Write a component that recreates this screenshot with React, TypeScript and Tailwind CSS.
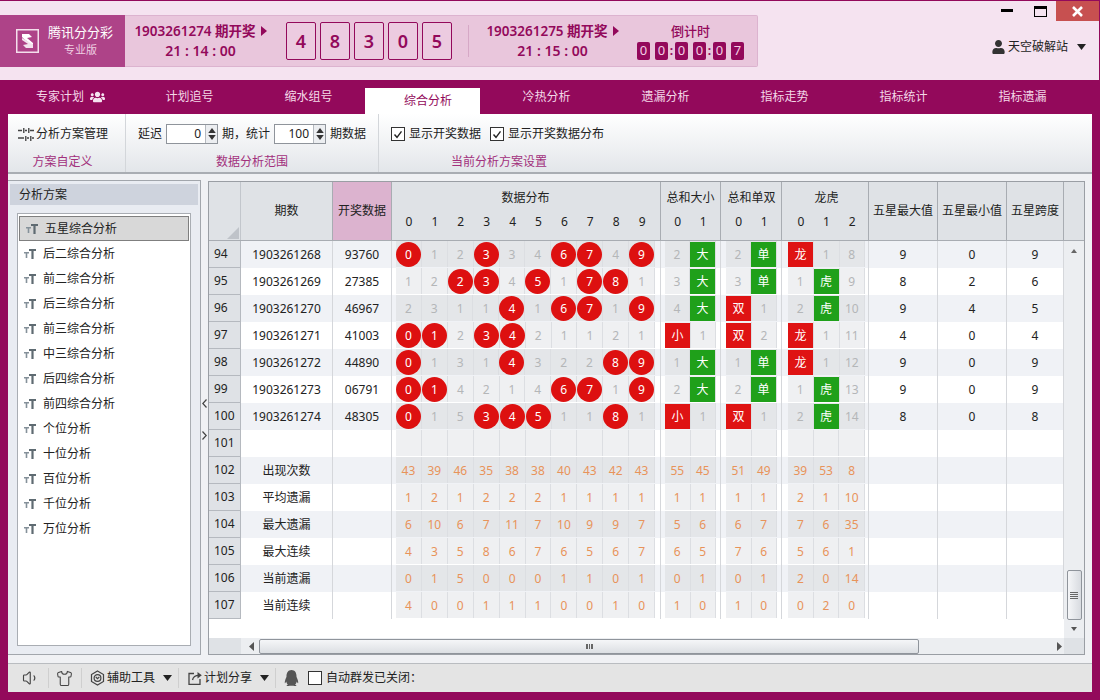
import { Shirt, Volume1 } from 'lucide-react'
import { FaQq, FaUser, FaUsers } from 'react-icons/fa'

// ---- 数据 ----

type Mark = number | string

interface DrawRow {
  no: number
  period: string
  draw: string
  dist: number[]
  size: Mark[]
  parity: Mark[]
  dragon: Mark[]
  max: number
  min: number
  span: number
}

const draws: DrawRow[] = [
  { no: 94, period: '1903261268', draw: '93760', dist: [0, 1, 2, 0, 3, 4, 0, 0, 4, 0], size: [2, '大'], parity: [2, '单'], dragon: ['龙', 1, 8], max: 9, min: 0, span: 9 },
  { no: 95, period: '1903261269', draw: '27385', dist: [1, 2, 0, 0, 4, 0, 1, 0, 0, 1], size: [3, '大'], parity: [3, '单'], dragon: [1, '虎', 9], max: 8, min: 2, span: 6 },
  { no: 96, period: '1903261270', draw: '46967', dist: [2, 3, 1, 1, 0, 1, 0, 0, 1, 0], size: [4, '大'], parity: ['双', 1], dragon: [2, '虎', 10], max: 9, min: 4, span: 5 },
  { no: 97, period: '1903261271', draw: '41003', dist: [0, 0, 2, 0, 0, 2, 1, 1, 2, 1], size: ['小', 1], parity: ['双', 2], dragon: ['龙', 1, 11], max: 4, min: 0, span: 4 },
  { no: 98, period: '1903261272', draw: '44890', dist: [0, 1, 3, 1, 0, 3, 2, 2, 0, 0], size: [1, '大'], parity: [1, '单'], dragon: ['龙', 1, 12], max: 9, min: 0, span: 9 },
  { no: 99, period: '1903261273', draw: '06791', dist: [0, 0, 4, 2, 1, 4, 0, 0, 1, 0], size: [2, '大'], parity: [2, '单'], dragon: [1, '虎', 13], max: 9, min: 0, span: 9 },
  { no: 100, period: '1903261274', draw: '48305', dist: [0, 1, 5, 0, 0, 0, 1, 1, 0, 1], size: ['小', 1], parity: ['双', 1], dragon: [2, '虎', 14], max: 8, min: 0, span: 8 },
]

const stats = [
  { no: 102, label: '出现次数', dist: [43, 39, 46, 35, 38, 38, 40, 43, 42, 43], size: [55, 45], parity: [51, 49], dragon: [39, 53, 8] },
  { no: 103, label: '平均遗漏', dist: [1, 2, 1, 2, 2, 2, 1, 1, 1, 1], size: [1, 1], parity: [1, 1], dragon: [2, 1, 10] },
  { no: 104, label: '最大遗漏', dist: [6, 10, 6, 7, 11, 7, 10, 9, 9, 7], size: [5, 6], parity: [6, 7], dragon: [7, 6, 35] },
  { no: 105, label: '最大连续', dist: [4, 3, 5, 8, 6, 7, 6, 5, 6, 7], size: [6, 5], parity: [7, 6], dragon: [5, 6, 1] },
  { no: 106, label: '当前遗漏', dist: [0, 1, 5, 0, 0, 0, 1, 1, 0, 1], size: [0, 1], parity: [0, 1], dragon: [2, 0, 14] },
  { no: 107, label: '当前连续', dist: [4, 0, 0, 1, 1, 1, 0, 0, 1, 0], size: [1, 0], parity: [1, 0], dragon: [0, 2, 0] },
]

const tabs = ['专家计划', '计划追号', '缩水组号', '综合分析', '冷热分析', '遗漏分析', '指标走势', '指标统计', '指标遗漏']

const schemes = [
  '五星综合分析', '后二综合分析', '前二综合分析', '后三综合分析', '前三综合分析', '中三综合分析', '后四综合分析',
  '前四综合分析', '个位分析', '十位分析', '百位分析', '千位分析', '万位分析',
]

const GREEN_MARKS = ['大', '单', '虎']
const DIGITS = [0, 1, 2, 3, 4, 5, 6, 7, 8, 9]

// 列宽: 序号 / 期数 / 开奖 / 分布 / 大小 / 单双 / 龙虎 / 最大 / 最小 / 跨度
const COL_NO = 'w-[32px] shrink-0'
const COL_PERIOD = 'w-[92px] shrink-0'
const COL_DRAW = 'w-[59px] shrink-0'
const COL_DIST = 'w-[269px] shrink-0 pl-[4px] pr-[5px]'
const COL_SIZE = 'w-[60px] shrink-0 pl-[4px] pr-[4px]'
const COL_PARITY = 'w-[61px] shrink-0 pl-[5px] pr-[4px]'
const COL_DRAGON = 'w-[87px] shrink-0 pl-[6px] pr-[3px]'
const COL_MAX = 'w-[69px] shrink-0'
const COL_MIN = 'w-[69px] shrink-0'
const COL_SPAN = 'w-[57px] shrink-0'

// ---- 小图标 ----

function Caret({ className = '' }: { className?: string }) {
  return (
    <svg width="9" height="6" viewBox="0 0 9 6" className={className}>
      <path d="M0 0h9L4.5 6z" fill="currentColor" />
    </svg>
  )
}

function PlayMark() {
  return (
    <svg width="6" height="10" viewBox="0 0 6 10" className="ml-[5px] inline-block">
      <path d="M0 0l6 5-6 5z" fill="#93095b" />
    </svg>
  )
}

function LogoMark() {
  return (
    <svg width="23" height="24" viewBox="0 0 23 24" className="shrink-0">
      <rect x="0.75" y="0.75" width="21.5" height="22.5" fill="none" stroke="#f4dfec" strokeWidth="1.5" />
      <path d="M6 5h7l3 3-5 1 6 5v2l-9-6-2-2z" fill="#fff" />
      <path d="M17 19h-7l-3-3 5-1-6-4V9l9 5 2 2z" fill="#fff" opacity="0.85" />
    </svg>
  )
}

function SizeIcon() {
  return (
    <svg width="12" height="10" viewBox="0 0 12 10" className="shrink-0">
      <path d="M5 0h7v2H9.6v8H7.4V2H5z" fill="#5f6b72" />
      <path d="M0 3h5v1.5H3.3V9H1.7V4.5H0z" fill="#85919a" />
    </svg>
  )
}

function SlidersIcon() {
  return (
    <svg width="16" height="13" viewBox="0 0 16 13" className="shrink-0">
      <path d="M0 2.5h4M7 2.5h2M12 2.5h4M0 10h6M9 10h2M14 10h2" stroke="#444" strokeWidth="1.6" />
      <path d="M5 0h1.5v5H5zM10 0h1.5v5H10zM7 8h1.5v5H7zM12 8h1.5v5H12z" fill="#555" />
    </svg>
  )
}

function ToolIcon() {
  return (
    <svg width="15" height="16" viewBox="0 0 15 16" fill="none" stroke="#444" strokeWidth="1.2" className="shrink-0">
      <path d="M7.5 1l6 3.5v7l-6 3.5-6-3.5v-7z" />
      <circle cx="7.5" cy="8" r="3.4" />
      <path d="M5.8 7l1.7 1.6L9.3 7" />
    </svg>
  )
}

function ShareIcon() {
  return (
    <svg width="15" height="14" viewBox="0 0 15 14" fill="none" stroke="#444" strokeWidth="1.3" className="shrink-0">
      <path d="M6 2.5H1v10.8h11V8" />
      <path d="M4.5 9c.6-3 3-4.6 6.5-4.6" />
      <path d="M9.5 1l4.3 3.3-4.3 3.2z" fill="#444" stroke="none" />
    </svg>
  )
}

function Check({ checked = false }: { checked?: boolean }) {
  return (
    <span className="flex h-[14px] w-[14px] shrink-0 items-center justify-center border border-[#333] bg-white">
      {checked && (
        <svg width="10" height="9" viewBox="0 0 10 9" fill="none" stroke="#222" strokeWidth="1.4">
          <path d="M1.5 4.5l2.5 2.8 4.5-6" />
        </svg>
      )}
    </span>
  )
}

// ---- 顶部 ----

function IssueInfo({ issue, time }: { issue: string; time: string }) {
  return (
    <div className="flex w-[135px] shrink-0 flex-col items-center gap-[2px] text-[13.5px] leading-[18px] font-semibold text-[#93095b]">
      <div className="flex items-center whitespace-nowrap">
        {issue} 期开奖
        <PlayMark />
      </div>
      <div className="text-[14px] whitespace-pre">{time}</div>
    </div>
  )
}

function CountDigit({ value }: { value: string }) {
  return (
    <span className="flex h-[18px] w-[13px] items-center justify-center rounded-[2px] bg-[#93095b] text-[13px] text-[#f3cfe4]">
      {value}
    </span>
  )
}

function Header() {
  return (
    <div className="flex h-[80px] shrink-0 border-t border-r border-[#93095b] bg-[#f5e3f0]">
      <div className="mt-[14px] flex h-[52px] w-[758px] shrink-0 items-center rounded-r-[2px] border-y border-r border-[#dcb3cf] bg-[#e9c6dc]">
        <div className="flex h-[52px] w-[125px] shrink-0 items-center gap-[9px] bg-[#ae4388] pl-[16px]">
          <LogoMark />
          <div className="flex flex-col items-center text-white">
            <span className="text-[13px] leading-[18px] whitespace-nowrap">腾讯分分彩</span>
            <span className="text-[11px] leading-[18px] text-[#efcfe2]">专业版</span>
          </div>
        </div>
        <div className="ml-[8px]">
          <IssueInfo issue="1903261274" time="21 : 14 : 00" />
        </div>
        <div className="ml-[18px] flex gap-[4px]">
          {['4', '8', '3', '0', '5'].map((n, i) => (
            <span
              key={i}
              className="flex h-[38px] w-[30px] items-center justify-center rounded-[2px] border border-[#93095b] bg-[#eccbe0] text-[18px] font-semibold text-[#93095b]"
            >
              {n}
            </span>
          ))}
        </div>
        <div className="mx-[16px] h-[32px] w-px bg-[#d6a8c6]" />
        <IssueInfo issue="1903261275" time="21 : 15 : 00" />
        <div className="ml-[17px] flex flex-col items-center gap-[2px]">
          <span className="text-[13px] leading-[18px] font-medium text-[#93095b]">倒计时</span>
          <div className="flex items-center text-[#93095b]">
            <div className="flex gap-[5px]">
              <CountDigit value="0" />
              <CountDigit value="0" />
            </div>
            <span className="w-[7px] text-center text-[12px] leading-none font-bold">:</span>
            <div className="flex gap-[5px]">
              <CountDigit value="0" />
              <CountDigit value="0" />
            </div>
            <span className="w-[7px] text-center text-[12px] leading-none font-bold">:</span>
            <div className="flex gap-[5px]">
              <CountDigit value="0" />
              <CountDigit value="7" />
            </div>
          </div>
        </div>
      </div>

      <div className="flex flex-1 flex-col">
        <div className="flex h-[20px] items-start justify-end">
          <span className="mt-[8px] mr-[21px] h-[3px] w-[12px] bg-black" />
          <span className="mt-[5px] mr-[9px] h-[11px] w-[13px] border border-t-[3px] border-black" />
          <span className="flex h-[20px] w-[43px] items-center justify-center bg-[#c75050]">
            <svg width="11" height="11" viewBox="0 0 11 11" stroke="#fff" strokeWidth="2.6">
              <path d="M1 1l9 9M10 1l-9 9" />
            </svg>
          </span>
        </div>
        <div className="mt-[17px] flex items-center pl-[233px] text-[12px] whitespace-nowrap text-[#222]">
          <FaUser className="mr-[2px] h-[14px] w-[15px] text-[#333]" />
          天空破解站
          <Caret className="ml-[9px] text-[#222]" />
        </div>
      </div>
    </div>
  )
}

function NavTabs() {
  return (
    <div className="flex h-[34px] shrink-0 pl-[11px] text-[12px]">
      {tabs.map((tab, i) => (
        <div key={tab} className="flex w-[119px] shrink-0">
          {i === 3 ? (
            // 选中页签比文字偏左
            <div className="mt-[8px] mr-[7px] -ml-[3px] flex flex-1 items-center justify-center bg-white pl-[11px] text-[#93095b]">{tab}</div>
          ) : (
            <div className="flex flex-1 items-center justify-center gap-[6px] text-[#f3d8e8]">
              {tab}
              {i === 0 && <FaUsers className="h-[14px] w-[15px] text-[#f5e3f0]" />}
            </div>
          )}
        </div>
      ))}
    </div>
  )
}

// ---- 工具栏 ----

function Spinner({ value }: { value: number }) {
  return (
    <div className="flex h-[20px] w-[52px] border border-[#8f949b] bg-white">
      <span className="flex-1 pr-[4px] text-right text-[12px] leading-[18px] text-[#222]">{value}</span>
      <span className="flex w-[12px] flex-col items-center justify-center gap-[2px] border-l border-[#b5b9bf] bg-[#eceef1]">
        <Caret className="h-[5px] w-[8px] rotate-180 text-[#333]" />
        <Caret className="h-[5px] w-[8px] text-[#333]" />
      </span>
    </div>
  )
}

function ToolGroup({ width, label, labelClass = '', children }: { width: string; label: string; labelClass?: string; children: React.ReactNode }) {
  return (
    <div className={`${width} flex shrink-0 flex-col border-r border-[#d3d6da]`}>
      <div className="flex h-[41px] items-center pb-px whitespace-nowrap">{children}</div>
      <div className={`${labelClass} text-center text-[12px] leading-[14px] text-[#a2307c]`}>{label}</div>
    </div>
  )
}

function Toolbar() {
  return (
    <div className="flex h-[60px] shrink-0 border-b-2 border-[#a9adb3] bg-linear-to-b from-white to-[#e3e6ea] text-[12px] text-[#222]">
      <ToolGroup width="w-[118px]" label="方案自定义" labelClass="pr-[8px]">
        <div className="flex items-center gap-[2px] pl-[10px]">
          <SlidersIcon />
          分析方案管理
        </div>
      </ToolGroup>
      <ToolGroup width="w-[253px]" label="数据分析范围">
        <div className="flex items-center pl-[12px]">
          延迟
          <span className="w-[4px]" />
          <Spinner value={0} />
          <span className="w-[4px]" />
          期，统计
          <span className="w-[4px]" />
          <Spinner value={100} />
          <span className="w-[4px]" />
          期数据
        </div>
      </ToolGroup>
      <div className="flex w-[240px] shrink-0 flex-col">
        <div className="flex h-[41px] items-center pb-px pl-[12px] whitespace-nowrap">
          <Check checked />
          <span className="ml-[4px]">显示开奖数据</span>
          <span className="ml-[9px]">
            <Check checked />
          </span>
          <span className="ml-[4px]">显示开奖数据分布</span>
        </div>
        <div className="text-center text-[12px] leading-[14px] text-[#a2307c]">当前分析方案设置</div>
      </div>
    </div>
  )
}

// ---- 左侧方案列表 ----

function SchemePanel() {
  return (
    <div className="flex w-[193px] shrink-0 flex-col border-y border-r border-[#a2a6ac] bg-[#e9ecf2]">
      <div className="mx-[2px] mt-[3px] h-[21px] bg-[#ced3dd] pl-[9px] text-[12px] leading-[21px] text-[#222]">分析方案</div>
      <div className="mx-[9px] mt-[8px] mb-[8px] flex-1 border border-[#a9adb3] bg-white pt-[1px] text-[12px] text-[#222]">
        {schemes.map((name, i) => (
          <div
            key={name}
            className={`flex h-[25px] items-center gap-[7px] pl-[6px] ${
              i === 0 ? 'mx-px mt-px h-[24px] border border-[#7f7f7f] bg-[#d8d8d8] pl-[5px]' : ''
            }`}
          >
            <SizeIcon />
            {name}
          </div>
        ))}
      </div>
    </div>
  )
}

function Splitter() {
  return (
    <div className="flex w-[7px] shrink-0 flex-col items-center bg-[#f0f1f4] pt-[219px] text-[#444]">
      <svg width="5" height="9" viewBox="0 0 5 9" fill="none" stroke="currentColor" strokeWidth="1.2">
        <path d="M4.5.5L.8 4.5l3.7 4" />
      </svg>
      <svg width="5" height="9" viewBox="0 0 5 9" fill="none" stroke="currentColor" strokeWidth="1.2" className="mt-[23px]">
        <path d="M.5.5l3.7 4-3.7 4" />
      </svg>
    </div>
  )
}

// ---- 表格 ----

function HeaderGroup({ title, labels, className }: { title: string; labels: number[]; className: string }) {
  return (
    <div className={`${className} flex flex-col border-r border-[#a8acb2]`}>
      <div className="h-[30px] pt-[7px] text-center leading-[18px] whitespace-nowrap">{title}</div>
      <div className="flex">
        {labels.map((n) => (
          <span key={n} className="w-[26px] text-center leading-[20px]">
            {n}
          </span>
        ))}
      </div>
    </div>
  )
}

function HeaderCell({ className, children }: { className: string; children: React.ReactNode }) {
  return (
    <div className={`${className} flex items-center justify-center border-r border-[#a8acb2] whitespace-nowrap`}>{children}</div>
  )
}

function GridHeader() {
  return (
    <div className="flex h-[59px] shrink-0 border-b border-[#a8acb2] bg-[#dfe2e6] text-[12px] text-[#222]">
      <div className={`${COL_NO} flex items-end justify-end border-r border-[#c2c6cc] p-[1px]`}>
        <svg width="12" height="12" viewBox="0 0 12 12">
          <path d="M12 0v12H0z" fill="#bfc3c9" />
        </svg>
      </div>
      <HeaderCell className={COL_PERIOD}>期数</HeaderCell>
      <HeaderCell className={`${COL_DRAW} bg-[#dcb3cf]`}>开奖数据</HeaderCell>
      <HeaderGroup title="数据分布" labels={DIGITS} className={COL_DIST} />
      <HeaderGroup title="总和大小" labels={[0, 1]} className={COL_SIZE} />
      <HeaderGroup title="总和单双" labels={[0, 1]} className={COL_PARITY} />
      <HeaderGroup title="龙虎" labels={[0, 1, 2]} className={COL_DRAGON} />
      <HeaderCell className={COL_MAX}>五星最大值</HeaderCell>
      <HeaderCell className={COL_MIN}>五星最小值</HeaderCell>
      <HeaderCell className={COL_SPAN}>五星跨度</HeaderCell>
      <div className="flex-1" />
    </div>
  )
}

// 一格: 灰色遗漏值 / 橙色统计值 / 红球 / 红绿方块
function MarkCell({ striped, tone, value, ball }: { striped: boolean; tone: 'gray' | 'orange'; value?: Mark; ball?: number }) {
  const bg = striped ? 'bg-[#e4e6e9]' : 'bg-[#eff0f2]'
  const text = tone === 'gray' ? 'text-[#b4b6b8]' : 'text-[#e8935a]'
  let inner: React.ReactNode = value
  if (ball !== undefined) {
    inner = (
      <span className="flex h-[25px] w-[25px] shrink-0 items-center justify-center rounded-full bg-[#dd1010] text-white">{ball}</span>
    )
  } else if (typeof value === 'string') {
    inner = (
      <span
        className={`flex h-[25px] w-[25px] shrink-0 items-center justify-center text-white ${
          GREEN_MARKS.includes(value) ? 'bg-[#1fa01a]' : 'bg-[#df1313]'
        }`}
      >
        {value}
      </span>
    )
  }
  return (
    <span className={`flex h-[26px] w-[26px] items-center justify-center border-r border-[#dcdee2] pt-px ${bg} ${text}`}>{inner}</span>
  )
}

function MarkGroup({ className, striped, tone, values, hit }: { className: string; striped: boolean; tone: 'gray' | 'orange'; values?: Mark[]; hit?: boolean }) {
  const list = values ?? DIGITS.map(() => '')
  return (
    <div className={`${className} flex border-r border-[#d5d7db]`}>
      {list.map((v, i) => (
        <MarkCell
          key={i}
          striped={striped}
          tone={tone}
          value={v === '' ? undefined : v}
          ball={hit && v === 0 ? i : undefined}
        />
      ))}
    </div>
  )
}

function PlainCell({ className, children }: { className: string; children?: React.ReactNode }) {
  return <div className={`${className} flex items-center justify-center border-r border-[#d5d7db]`}>{children}</div>
}

function RowNo({ no }: { no: number }) {
  return (
    <div className={`${COL_NO} border-r border-b border-[#b5b9bf] bg-[#dfe2e6] pl-[5px] text-[12px] leading-[26px]`}>{no}</div>
  )
}

function GridBody() {
  return (
    <div className="flex flex-col text-[12px] text-[#222]">
      {draws.map((row) => {
        const striped = row.no % 2 === 0
        return (
          <div key={row.no} className={`flex h-[27px] ${striped ? 'bg-[#f0f2f6]' : 'bg-white'}`}>
            <RowNo no={row.no} />
            <PlainCell className={COL_PERIOD}>{row.period}</PlainCell>
            <PlainCell className={COL_DRAW}>{row.draw}</PlainCell>
            <MarkGroup className={COL_DIST} striped={striped} tone="gray" values={row.dist} hit />
            <MarkGroup className={COL_SIZE} striped={striped} tone="gray" values={row.size} />
            <MarkGroup className={COL_PARITY} striped={striped} tone="gray" values={row.parity} />
            <MarkGroup className={COL_DRAGON} striped={striped} tone="gray" values={row.dragon} />
            <PlainCell className={COL_MAX}>{row.max}</PlainCell>
            <PlainCell className={COL_MIN}>{row.min}</PlainCell>
            <PlainCell className={COL_SPAN}>{row.span}</PlainCell>
          </div>
        )
      })}

      {/* 101 空行 */}
      <div className="flex h-[27px] bg-white">
        <RowNo no={101} />
        <PlainCell className={COL_PERIOD} />
        <PlainCell className={COL_DRAW} />
        <MarkGroup className={COL_DIST} striped={false} tone="gray" />
        <MarkGroup className={COL_SIZE} striped={false} tone="gray" values={['', '']} />
        <MarkGroup className={COL_PARITY} striped={false} tone="gray" values={['', '']} />
        <MarkGroup className={COL_DRAGON} striped={false} tone="gray" values={['', '', '']} />
        <PlainCell className={COL_MAX} />
        <PlainCell className={COL_MIN} />
        <PlainCell className={COL_SPAN} />
      </div>

      {stats.map((row) => {
        const striped = row.no % 2 === 0
        return (
          <div key={row.no} className={`flex h-[27px] ${striped ? 'bg-[#f0f2f6]' : 'bg-white'}`}>
            <RowNo no={row.no} />
            <PlainCell className={COL_PERIOD}>{row.label}</PlainCell>
            <PlainCell className={COL_DRAW} />
            <MarkGroup className={COL_DIST} striped={striped} tone="orange" values={row.dist} />
            <MarkGroup className={COL_SIZE} striped={striped} tone="orange" values={row.size} />
            <MarkGroup className={COL_PARITY} striped={striped} tone="orange" values={row.parity} />
            <MarkGroup className={COL_DRAGON} striped={striped} tone="orange" values={row.dragon} />
            <PlainCell className={COL_MAX} />
            <PlainCell className={COL_MIN} />
            <PlainCell className={COL_SPAN} />
          </div>
        )
      })}
    </div>
  )
}

function HScrollBar() {
  return (
    <div className="flex h-[16px] shrink-0 items-center bg-[#eceef1]">
      <span className="h-full w-[32px] shrink-0 bg-[#dfe2e6]" />
      <svg width="5" height="9" viewBox="0 0 5 9" className="ml-[8px] text-[#555]">
        <path d="M5 0v9L0 4.5z" fill="currentColor" />
      </svg>
      <div className="ml-[5px] flex h-[15px] w-[660px] items-center justify-center rounded-[2px] border border-[#8f949b] bg-linear-to-b from-[#f5f6f8] to-[#dcdfe3]">
        <span className="h-[5px] w-[7px] border-x border-[#666] bg-[repeating-linear-gradient(90deg,#666_0,#666_1px,transparent_1px,transparent_2px)]" />
      </div>
      <svg width="5" height="9" viewBox="0 0 5 9" className="ml-[138px] text-[#555]">
        <path d="M0 0v9l5-4.5z" fill="currentColor" />
      </svg>
    </div>
  )
}

function VScrollBar() {
  return (
    <div className="flex w-[20px] shrink-0 flex-col">
      <div className="h-[59px] shrink-0 border-b border-[#a8acb2] bg-[#dfe2e6]" />
      <div className="flex flex-1 flex-col items-center bg-[#eceef1] pt-[8px]">
        <Caret className="h-[4px] w-[8px] rotate-180 text-[#666]" />
        <div className="mt-[317px] flex h-[50px] w-[15px] flex-col items-center justify-center gap-[1px] rounded-[2px] border border-[#8f949b] bg-linear-to-r from-[#f5f6f8] to-[#d8dbe0]">
          <span className="h-px w-[8px] bg-[#666]" />
          <span className="h-px w-[8px] bg-[#666]" />
          <span className="h-px w-[8px] bg-[#666]" />
          <span className="h-px w-[8px] bg-[#666]" />
        </div>
        <Caret className="mt-[7px] h-[4px] w-[8px] text-[#555]" />
      </div>
      <div className="h-[16px] shrink-0 bg-[#dfe2e6]" />
    </div>
  )
}

function DataGrid() {
  return (
    <div className="mt-px flex w-[877px] shrink-0 border border-[#9a9ea4] bg-white">
      <div className="flex w-[855px] shrink-0 flex-col">
        <GridHeader />
        <GridBody />
        <div className="flex-1" />
        <HScrollBar />
      </div>
      <VScrollBar />
    </div>
  )
}

// ---- 底部状态栏 ----

function Divider() {
  return <span className="h-[20px] w-px bg-[#cfcfcf]" />
}

function StatusBar() {
  return (
    <div className="flex h-[29px] shrink-0 items-center border-t border-[#b9bcc0] bg-[#e4e4e4] text-[12px] whitespace-nowrap text-[#222]">
      <Volume1 className="ml-[14px] h-[18px] w-[18px] text-[#444]" strokeWidth={1.5} />
      <span className="w-[8px]" />
      <Divider />
      <Shirt className="ml-[7px] h-[17px] w-[17px] text-[#444]" strokeWidth={1.5} />
      <span className="w-[8px]" />
      <Divider />
      <span className="ml-[8px] flex items-center gap-[2px]">
        <ToolIcon />
        辅助工具
      </span>
      <Caret className="mr-[6px] ml-[8px] text-[#222]" />
      <Divider />
      <span className="ml-[9px] flex items-center gap-[1px]">
        <ShareIcon />
        计划分享
      </span>
      <Caret className="mr-[6px] ml-[8px] text-[#222]" />
      <Divider />
      <FaQq className="ml-[8px] h-[16px] w-[15px] text-[#555]" />
      <span className="ml-[9px]">
        <Check />
      </span>
      <span className="ml-[4px]">自动群发已关闭：</span>
    </div>
  )
}

export default function App() {
  return (
    <div className="flex h-[700px] w-[1100px] flex-col overflow-hidden bg-[#93095b] [font-family:'Noto_Sans','Noto_Sans_CJK_SC',sans-serif]">
      <Header />
      <NavTabs />
      <div className="mx-[8px] flex h-[578px] flex-col bg-[#f0f1f4]">
        <Toolbar />
        <div className="flex h-[489px] shrink-0 pt-[6px] pb-[8px]">
          <SchemePanel />
          <Splitter />
          <DataGrid />
        </div>
        <StatusBar />
      </div>
    </div>
  )
}
